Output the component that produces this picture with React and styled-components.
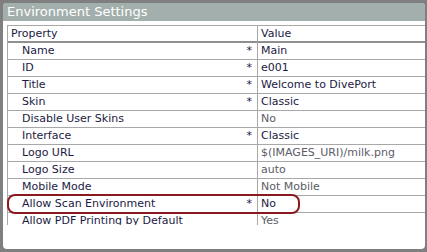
import React from "react";
import styled, { createGlobalStyle } from "styled-components";

const Global = createGlobalStyle`
  html, body { margin: 0; padding: 0; background: #7f7f7f; }
  body { width: 427px; height: 252px; overflow: hidden; font-family: "DejaVu Sans", Verdana, sans-serif; }
`;

const Frame = styled.div`
  width: 427px;
  height: 252px;
  box-sizing: border-box;
  padding: 3px 2px 3px 3px;
  background: #7f7f7f;
`;

const Panel = styled.div`
  height: 100%;
  background: #ffffff;
  border-radius: 4px;
  overflow: hidden;
  display: flex;
  flex-direction: column;
`;

const TitleBar = styled.div`
  height: 18px;
  background: #a2afac;
  color: #ffffff;
  font-size: 13px;
  line-height: 18px;
  padding-left: 4px;
  white-space: nowrap;
`;

const Body = styled.div`
  position: relative;
  padding: 4px 0 0 4px;
`;

const Grid = styled.div`
  height: 200px;
  overflow: hidden;
  border-left: 1px solid #a8a8a8;
`;

const Table = styled.div`
  width: 520px;
  display: grid;
  grid-template-columns: 250px 1fr;
`;

const Row = styled.div`
  display: contents;
`;

const Cell = styled.div`
  height: ${(p) => (p.$head ? 15 : 16)}px;
  line-height: ${(p) => (p.$head ? 15 : 16)}px;
  font-size: 11px;
  white-space: nowrap;
  border-bottom: ${(p) => (p.$head ? "2px solid #8f8f8f" : "1px solid #a8a8a8")};
  border-top: ${(p) => (p.$head ? "1px solid #a8a8a8" : "none")};
  border-right: ${(p) => (p.$key ? "1px solid #a8a8a8" : "none")};
  color: ${(p) => (p.$muted ? "#5c5c68" : "#1b1a44")};
  padding-left: ${(p) => (p.$head ? 3 : p.$key ? 14 : 3)}px;
  padding-right: ${(p) => (p.$key ? 5 : 0)}px;
  display: flex;
  justify-content: space-between;
`;

const Star = styled.span`
  color: #1b1a44;
`;

const Highlight = styled.div`
  position: absolute;
  left: 4px;
  top: 173px;
  width: 289px;
  height: 16px;
  border: 2px solid #8a1a1e;
  border-radius: 8px;
  pointer-events: none;
`;

const rows = [
  ["Name", true, "Main", false],
  ["ID", true, "e001", false],
  ["Title", true, "Welcome to DivePort", false],
  ["Skin", true, "Classic", false],
  ["Disable User Skins", false, "No", true],
  ["Interface", true, "Classic", false],
  ["Logo URL", false, "$(IMAGES_URI)/milk.png", true],
  ["Logo Size", false, "auto", true],
  ["Mobile Mode", false, "Not Mobile", true],
  ["Allow Scan Environment", true, "No", false],
  ["Allow PDF Printing by Default", false, "Yes", true],
];

export default function App() {
  return (
    <>
      <Global />
      <Frame>
        <Panel>
          <TitleBar>Environment Settings</TitleBar>
          <Body>
            <Grid>
              <Table>
                <Row>
                  <Cell $head $key>Property</Cell>
                  <Cell $head>Value</Cell>
                </Row>
                {rows.map(([k, req, v, muted]) => (
                  <Row key={k}>
                    <Cell $key>
                      <span>{k}</span>
                      {req && <Star>*</Star>}
                    </Cell>
                    <Cell $muted={muted}>{v}</Cell>
                  </Row>
                ))}
              </Table>
            </Grid>
            <Highlight />
          </Body>
        </Panel>
      </Frame>
    </>
  );
}
